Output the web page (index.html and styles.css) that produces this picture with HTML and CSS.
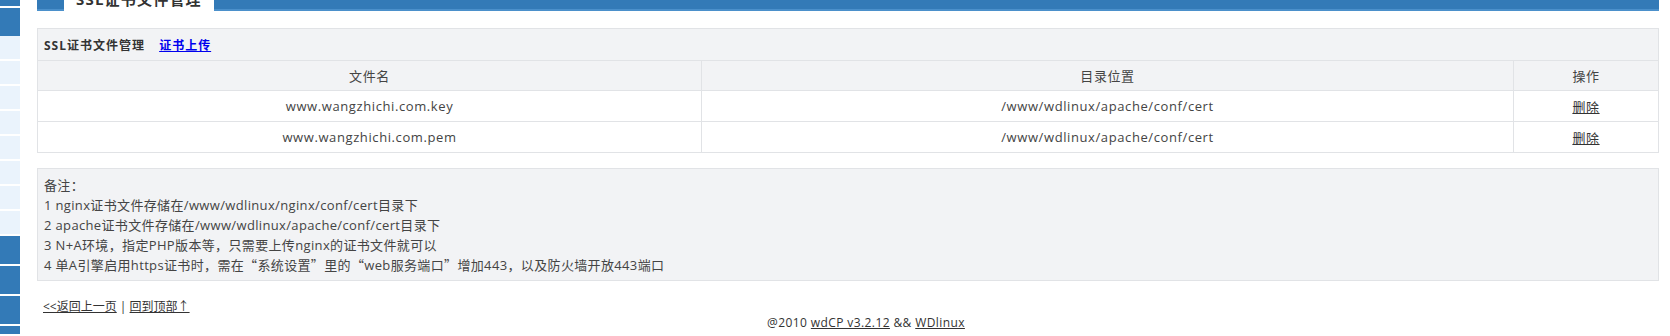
FILE: index.html
```html
<!DOCTYPE html>
<html lang="zh-CN">
<head>
  <meta charset="UTF-8" />
  <title>SSL证书文件管理</title>
  <link rel="stylesheet" href="styles.css">
</head>
<body>
  <!-- Left menu strip -->
  <div class="sidebar">
    <div class="menu-head menu-top"></div>
    <div class="menu-head menu-open"></div>
    <div class="menu-item"></div>
    <div class="menu-item"></div>
    <div class="menu-item"></div>
    <div class="menu-item"></div>
    <div class="menu-item"></div>
    <div class="menu-item"></div>
    <div class="menu-item"></div>
    <div class="menu-item"></div>
    <div class="menu-head"></div>
    <div class="menu-head"></div>
    <div class="menu-head"></div>
    <div class="menu-head menu-last"></div>
  </div>

  <div class="main">
    <!-- Tab bar -->
    <div class="tabbar">
      <span class="tab">SSL证书文件管理</span>
    </div>

    <!-- Certificate list -->
    <table class="list">
      <tr class="title-row">
        <td colspan="3">
          <b>SSL证书文件管理</b>
          <a href="#" class="upload">证书上传</a>
        </td>
      </tr>
      <tr class="head-row">
        <td class="col-name">文件名</td>
        <td class="col-dir">目录位置</td>
        <td>操作</td>
      </tr>
      <tr>
        <td>www.wangzhichi.com.key</td>
        <td>/www/wdlinux/apache/conf/cert</td>
        <td><a href="#">删除</a></td>
      </tr>
      <tr>
        <td>www.wangzhichi.com.pem</td>
        <td>/www/wdlinux/apache/conf/cert</td>
        <td><a href="#">删除</a></td>
      </tr>
    </table>

    <!-- Notes -->
    <div class="notes">
      备注<span class="cjk">：</span><br>
      1 nginx证书文件存储在/www/wdlinux/nginx/conf/cert目录下<br>
      2 apache证书文件存储在/www/wdlinux/apache/conf/cert目录下<br>
      3 N+A环境<span class="cjk">，</span>指定PHP版本等<span class="cjk">，</span>只需要上传nginx的证书文件就可以<br>
      4 单A引擎启用https证书时<span class="cjk">，</span>需在<span class="cjk">“</span>系统设置<span class="cjk">”</span>里的<span class="cjk">“</span>web服务端口<span class="cjk">”</span>增加443<span class="cjk">，</span>以及防火墙开放443端口
    </div>

    <div class="back">
      <a href="#">&lt;&lt;返回上一页</a> | <a href="#">回到顶部↑</a>
    </div>

    <div class="footer">
      @2010 <a href="#">wdCP v3.2.12</a> &amp;&amp; <a href="#">WDlinux</a>
    </div>
  </div>
</body>
</html>
```

FILE: styles.css
```css
* {
  margin: 0;
  padding: 0;
  box-sizing: border-box;
}
html {
  overflow: hidden;
  height: 336px;
}
body {
  font-family: "Microsoft YaHei", "Open Sans", "Noto Sans CJK SC", sans-serif;
  font-size: 12px;
  color: #444;
  background: #fff;
  display: flex;
  align-items: flex-start;
  overflow: hidden;
  height: 336px;
}
a {
  color: #333;
}
.cjk {
  font-family: "Noto Sans CJK SC", sans-serif;
}
/* Left menu strip */
.sidebar {
  width: 20px;
  flex-shrink: 0;
}
.menu-head {
  height: 28px;
  background: #337ab7;
  margin-bottom: 2px;
}
.menu-top {
  height: 6px;
}
.menu-open {
  margin-bottom: 0;
}
.menu-item {
  height: 23px;
  background: #eaf3fc;
  margin-bottom: 2px;
}
.menu-item + .menu-head {
  margin-top: 1px;
}
.menu-last {
  height: 8px;
  margin-bottom: 0;
}
/* Main column */
.main {
  margin-left: 17px;
  width: 1622px;
}
.tabbar {
  height: 24px;
  margin-top: -13px;
  background: #337ab7;
  border-bottom: 2px solid #4b90cb;
  padding-left: 27px;
}
.tab {
  display: inline-block;
  height: 24px;
  line-height: 24px;
  padding: 0 12px;
  background: #fff;
  font-weight: bold;
  font-size: 15px;
  color: #333;
  letter-spacing: 1.2px;
}
/* Table */
.list {
  width: 100%;
  margin-top: 17px;
  border-collapse: collapse;
  border: 1px solid #e1e3e6;
}
.list td {
  border: 1px solid #e1e3e6;
  text-align: center;
  height: 31px;
  font-size: 13px;
  letter-spacing: 0.6px;
}
.list .title-row td {
  height: 32px;
  text-align: left;
  padding-left: 6px;
  background: #f2f3f5;
  color: #333;
  font-size: 12px;
  letter-spacing: 1px;
  border-bottom: 1px solid #e1e3e6;
}
.title-row a.upload {
  color: #0000ee;
  font-weight: bold;
  margin-left: 10px;
}
.list .head-row td {
  height: 30px;
  background: #f2f3f5;
}
.col-name {
  width: 664px;
}
.col-dir {
  width: 812px;
}
/* Notes box */
.notes {
  margin-top: 15px;
  background: #f2f3f5;
  border: 1px solid #e1e3e6;
  padding: 6px 6px 5px;
  font-size: 13px;
  line-height: 20px;
  letter-spacing: 0.35px;
}
.back {
  margin-top: 18px;
  padding-left: 6px;
  line-height: 16px;
  color: #333;
  font-size: 12px;
  letter-spacing: 0;
}
.footer {
  text-align: center;
  line-height: 16px;
  color: #333;
  font-size: 12px;
  letter-spacing: 0.4px;
  padding-left: 36px;
}
```
